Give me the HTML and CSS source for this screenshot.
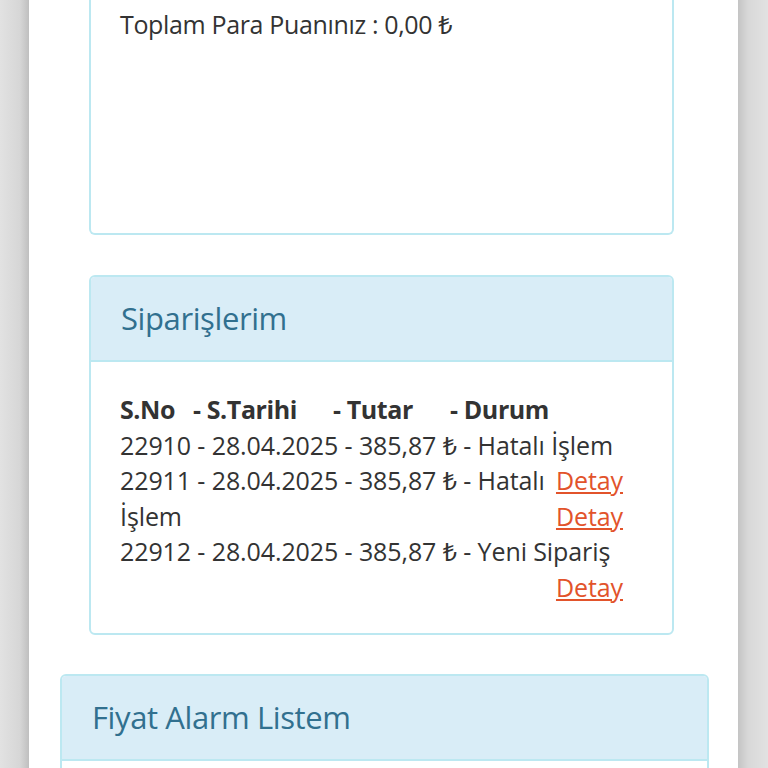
FILE: index.html
```html
<!DOCTYPE html>
<html lang="tr">
<head>
<meta charset="utf-8">
<title>Hesabım</title>
<link rel="stylesheet" href="styles.css">
</head>
<body>
<div class="page">
  <div class="inner">
    <div class="panel panel-top">
      <div class="panel-body points">
        <p>Toplam Para Puanınız : 0,00 ₺</p>
      </div>
    </div>

    <div class="panel panel-orders">
      <div class="panel-heading"><h3>Siparişlerim</h3></div>
      <div class="panel-body">
        <div class="orders">
          <div class="orders-head">
            <span>S.No</span><span>- S.Tarihi</span><span>- Tutar</span><span>- Durum</span>
          </div>
          <div class="line"><span>22910 - 28.04.2025 - 385,87 ₺ - Hatalı İşlem</span></div>
          <div class="line"><span>22911 - 28.04.2025 - 385,87 ₺ - Hatalı</span><a href="#">Detay</a></div>
          <div class="line"><span>İşlem</span><a href="#">Detay</a></div>
          <div class="line"><span>22912 - 28.04.2025 - 385,87 ₺ - Yeni Sipariş</span></div>
          <div class="line"><a href="#">Detay</a></div>
        </div>
      </div>
    </div>
  </div>

  <div class="panel panel-wide">
    <div class="panel-heading"><h3>Fiyat Alarm Listem</h3></div>
    <div class="panel-body"></div>
  </div>
</div>
</body>
</html>
```
FILE: styles.css
```css
html, body {
  margin: 0;
  padding: 0;
}
body {
  background: linear-gradient(to right, #e2e2e2 0, #d6d6d6 20px, #bfbfbf 29px, #ffffff 29px, #ffffff 738px, #c4c4c4 738px, #d8d8d8 748px, #e2e2e2 768px);
  font-family: "Open Sans", "Noto Sans", sans-serif;
  color: #333333;
  font-size: 25px;
  line-height: 35.5px;
  height: 768px;
  overflow: hidden;
}
.page {
  width: 709px;
  margin: 0 0 0 29px;
}
.inner {
  padding: 0 64px 0 60px;
}
.panel {
  border: 2px solid #bce8f1;
  border-radius: 6px;
  background: #ffffff;
  margin-bottom: 40px;
  overflow: hidden;
}
.panel-top {
  border-top: none;
  border-top-left-radius: 0;
  border-top-right-radius: 0;
}
.panel-orders {
  margin-bottom: 39px;
}
.panel-heading {
  background: #d9edf7;
  border-bottom: 2px solid #bce8f1;
  padding: 0 30px;
  height: 83px;
  display: flex;
  align-items: center;
}
.panel-heading h3 {
  margin: 0;
  font-weight: 400;
  font-size: 31px;
  color: #31708f;
  letter-spacing: -0.4px;
}
.panel-body {
  padding: 30px 49px 28px 29px;
}
.points {
  padding-top: 0;
  height: 198px;
  box-sizing: content-box;
}
.points p {
  margin: 7px 0 0 0;
  letter-spacing: -0.35px;
}
.orders {
  letter-spacing: -0.1px;
}
.orders-head {
  display: grid;
  grid-template-columns: 73px 140px 117px auto;
  font-weight: 700;
  letter-spacing: -0.4px;
}
.line {
  display: flex;
  justify-content: space-between;
  height: 35.5px;
  white-space: nowrap;
}
.line a {
  margin-left: auto;
  color: #e2532b;
  text-decoration: underline;
}
.panel-wide {
  margin: 0 29px 0 31px;
}
.panel-wide .panel-body {
  height: 60px;
}
```
